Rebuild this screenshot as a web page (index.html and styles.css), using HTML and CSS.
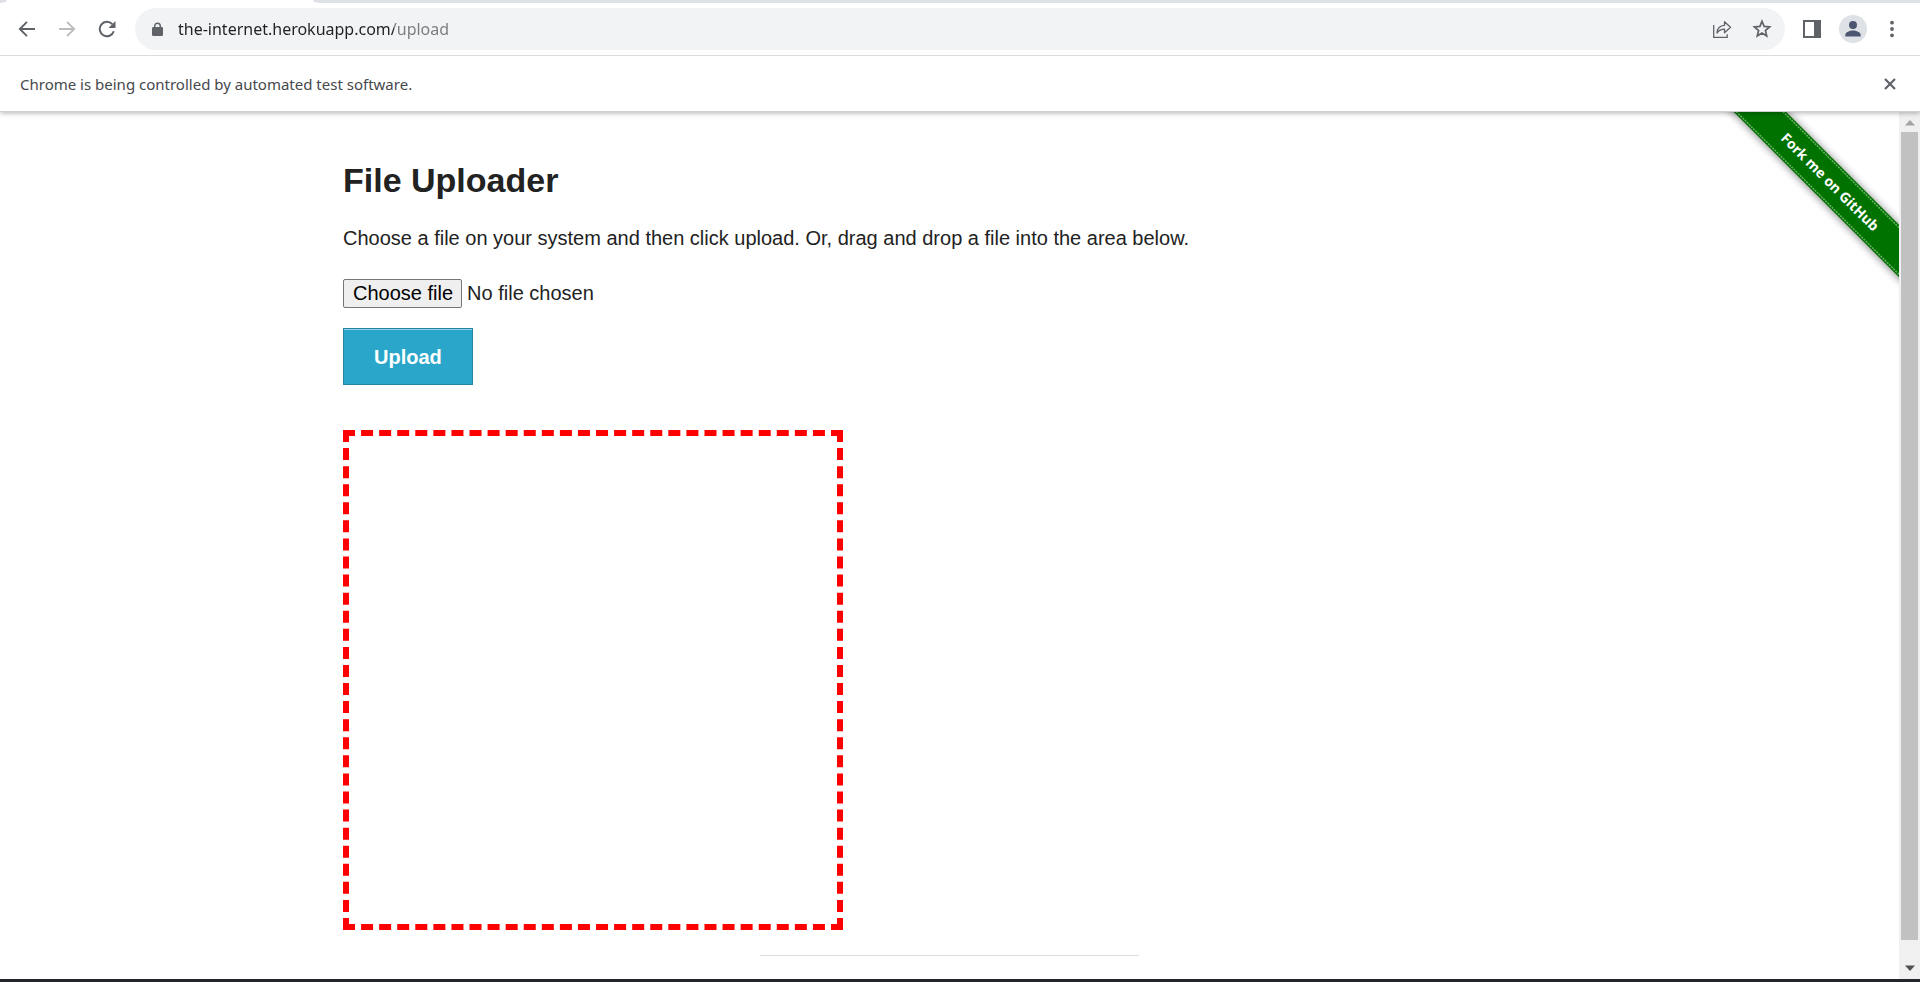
FILE: index.html
```html
<!DOCTYPE html>
<html lang="en">
<head>
<meta charset="utf-8">
<title>The Internet</title>
<link rel="stylesheet" href="styles.css">
</head>
<body>
<header class="browser">
  <div class="tab-strip"><span class="tab-edge"></span><span class="tab-rest"></span></div>
  <div class="toolbar">
    <button class="tool" type="button" aria-label="Back">
      <svg width="18" height="18" viewBox="0 0 18 18"><path d="M17 9H2M9 1.8 1.8 9 9 16.200" fill="none" stroke="#5f6368" stroke-width="1.900"/></svg>
    </button>
    <button class="tool" type="button" aria-label="Forward" disabled>
      <svg width="18" height="18" viewBox="0 0 18 18"><path d="M1 9h15M9 1.800 16.200 9 9 16.200" fill="none" stroke="#babcbe" stroke-width="1.900"/></svg>
    </button>
    <button class="tool" type="button" aria-label="Reload">
      <svg width="18" height="18" viewBox="0 0 18 18"><path d="M15.800 11.300A7.200 7.200 0 1 1 14.300 4.200" fill="none" stroke="#5f6368" stroke-width="2"/><path d="M17.500 1v7h-7z" fill="#5f6368"/></svg>
    </button>
    <div class="omnibox">
      <svg class="lock" width="11" height="15" viewBox="0 0 11 15"><path d="M2.700 6V4a2.800 2.800 0 0 1 5.600 0v2" fill="none" stroke="#5f6368" stroke-width="1.500"/><rect y="5" width="11" height="9" rx="1.200" fill="#5f6368"/></svg>
      <input class="url" type="text" aria-label="Address" value="the-internet.herokuapp.com/upload">
      <button class="tool" type="button" aria-label="Share">
        <svg width="20" height="20" viewBox="0 0 20 20" fill="none" stroke="#5f6368" stroke-width="1.300"><path d="M1.700 6v12.300h13.500v-3"/><path d="M5 14c.3-5 3-7.500 7.500-7.700V2.700l6 5.500-6 5.500V10.200C9 10.200 6.800 11.500 5 14z" stroke-linejoin="round"/></svg>
      </button>
      <button class="tool" type="button" aria-label="Bookmark this tab">
        <svg width="20" height="20" viewBox="0 0 20 20"><path d="m10 2.300 2.100 5.100 5.500.5-4.200 3.600 1.300 5.400-4.700-2.900-4.700 2.900 1.300-5.400-4.200-3.600 5.500-.5z" fill="none" stroke="#5f6368" stroke-width="1.700"/></svg>
      </button>
    </div>
    <button class="tool panel" type="button" aria-label="Side panel">
      <svg width="18" height="18" viewBox="0 0 18 18"><path d="M0 0h18v18H0zM2 2v14h9V2z" fill="#5f6368" fill-rule="evenodd"/></svg>
    </button>
    <button class="tool" type="button" aria-label="Profile">
      <svg width="28" height="28" viewBox="0 0 28 28"><circle cx="14" cy="14" r="14" fill="#dee1e6"/><circle cx="14" cy="10" r="4" fill="#4c5670"/><path d="M6.300 21.500v-1.500c0-3 4.500-4.500 7.700-4.500s7.700 1.500 7.700 4.500v1.500z" fill="#4c5670"/></svg>
    </button>
    <button class="tool menu" type="button" aria-label="Menu">
      <svg width="4" height="18" viewBox="0 0 4 18" fill="#5f6368"><circle cx="2" cy="2.700" r="1.900"/><circle cx="2" cy="9" r="1.900"/><circle cx="2" cy="15.300" r="1.900"/></svg>
    </button>
  </div>
  <div class="infobar">
    <span>Chrome is being controlled by automated test software.</span>
    <button class="tool" type="button" aria-label="Close">
      <svg width="12" height="12" viewBox="0 0 12 12"><path d="m1 1 10 10M11 1 1 11" stroke="#5f6368" stroke-width="2.200"/></svg>
    </button>
  </div>
</header>
<div class="viewport">
  <div class="page">
    <a class="ribbon" href="#github" aria-label="Fork me on GitHub">
      <svg width="186" height="186" viewBox="0 0 186 186">
        <defs><filter id="soft" x="-20%" y="-100%" width="140%" height="300%"><feGaussianBlur stdDeviation="4"/></filter></defs>
        <g transform="translate(117 70) rotate(45)">
          <rect x="-140" y="-18" width="280" height="37" fill="#000" opacity=".5" filter="url(#soft)"/>
          <rect x="-140" y="-18.500" width="280" height="37" fill="#007200"/>
          <path d="M-140-16.500h280M-140 16.500h280" stroke="#6aae6a" stroke-width="1.500" stroke-dasharray="2 1"/>
          <text class="ribbon-text" x="0" y="5" text-anchor="middle">Fork me on GitHub</text>
        </g>
      </svg>
    </a>
    <main class="content">
      <h3 class="title">File Uploader</h3>
      <p class="lead">Choose a file on your system and then click upload. Or, drag and drop a file into the area below.</p>
      <form class="form">
        <label class="picker" for="file-upload">
          <input class="picker-input" id="file-upload" type="file">
          <span class="picker-button">Choose file</span>
          <span>No file chosen</span>
        </label>
        <button class="submit" type="button">Upload</button>
      </form>
      <div class="drop-area"></div>
      <hr class="rule">
    </main>
  </div>
  <div class="scrollbar">
    <svg width="10" height="6" viewBox="0 0 10 6"><path d="M5 0 10 5.500H0z" fill="#a3a3a3"/></svg>
    <span class="thumb"></span>
    <svg width="10" height="6" viewBox="0 0 10 6"><path d="M0 .5h10L5 6z" fill="#505050"/></svg>
  </div>
</div>
<footer class="taskbar"></footer>
</body>
</html>
```
FILE: styles.css
```css
* { box-sizing: border-box; }

body {
  margin: 0;
  height: 100vh;
  display: flex;
  flex-direction: column;
  background: #fff;
  color: #222;
  font-family: "Liberation Sans", Arial, sans-serif;
  font-size: 20px;
}

.browser {
  position: relative;
  z-index: 1;
  background: #fff;
  border-bottom: 1px solid #d0d0d0;
  box-shadow: 0 1px 5px rgba(0, 0, 0, 0.3);
  font-family: "Noto Sans", "Open Sans", sans-serif;
}

.tab-strip {
  display: flex;
  justify-content: space-between;
  gap: 306px;
  height: 3px;
}

.tab-edge {
  width: 7px;
  background: #dee1e6;
  border-bottom-right-radius: 7px 3px;
}

.tab-rest {
  flex: 1;
  background: #dee1e6;
  border-bottom-left-radius: 7px 3px;
}

.toolbar {
  display: flex;
  align-items: center;
  gap: 22px;
  height: 53px;
  padding: 0 26px 0 18px;
  border-bottom: 1px solid #dadce0;
}

.tool {
  display: flex;
  padding: 0;
  border: 0;
  background: none;
}

.panel { margin-right: -4px; }

.menu { margin-left: 1px; }

.omnibox {
  display: flex;
  align-items: center;
  flex: 1;
  gap: 20px;
  height: 42px;
  margin: 0 -4px 0 -3px;
  padding: 0 13px 0 17px;
  border-radius: 21px;
  background: #f1f3f4;
}

.lock { margin-right: -5px; }

.url {
  flex: 1;
  min-width: 0;
  padding: 0;
  border: 0;
  outline: 0;
  font: 16px/24px "Noto Sans", "Open Sans", sans-serif;
  color: transparent;
  background: linear-gradient(to right, #202124 216px, #777a7e 216px);
  background-clip: text;
}

.infobar {
  display: flex;
  align-items: center;
  justify-content: space-between;
  height: 55px;
  padding: 0 24px 0 20px;
  color: #45484c;
  font-size: 15px;
}

.viewport {
  flex: 1;
  display: flex;
  min-height: 0;
}

.page {
  position: relative;
  flex: 1;
  overflow: hidden;
}

.ribbon {
  position: absolute;
  top: 0;
  right: 0;
  height: 186px;
}

.ribbon-text {
  fill: #fff;
  font: bold 14px "Open Sans", "Noto Sans", sans-serif;
}

.content {
  max-width: 1251px;
  margin: 0 auto;
  padding: 44px 19px 0;
}

.title {
  margin: 0 0 18px;
  font-size: 34px;
  line-height: 48px;
}

.lead {
  margin: 0 0 25px;
  line-height: 32px;
}

.form {
  display: flex;
  flex-direction: column;
  align-items: flex-start;
  gap: 20px;
  margin-bottom: 45px;
}

.picker {
  position: relative;
  display: flex;
  align-items: center;
  gap: 5px;
  line-height: 23px;
}

.picker-input {
  position: absolute;
  inset: 0;
  width: 100%;
  opacity: 0;
}

.picker-button {
  padding: 2px 8px 2px 9px;
  border: 1px solid #767676;
  border-radius: 2px;
  background: #efefef;
  color: #000;
}

.submit {
  padding: 17px 30px 16px;
  border: 1px solid #2284a1;
  background: #2ba6cb;
  box-shadow: inset 0 1px 0 rgba(255, 255, 255, 0.5);
  color: #fff;
  font: bold 20px/22px "Liberation Sans", Arial, sans-serif;
}

.drop-area {
  width: 500px;
  max-width: 100%;
  height: 500px;
  border: 6px dashed #f00;
}

.rule {
  width: 379px;
  margin: 25px auto 0;
  border: 0;
  border-top: 1px solid #ddd;
}

.scrollbar {
  display: flex;
  flex-direction: column;
  align-items: center;
  gap: 6px;
  width: 21px;
  padding: 8px 0;
  background: #f0f0f0;
}

.thumb {
  flex: 1;
  width: 17px;
  margin-bottom: 19px;
  background: #c1c1c1;
}

.taskbar {
  height: 3px;
  background: #22252b;
}
```
